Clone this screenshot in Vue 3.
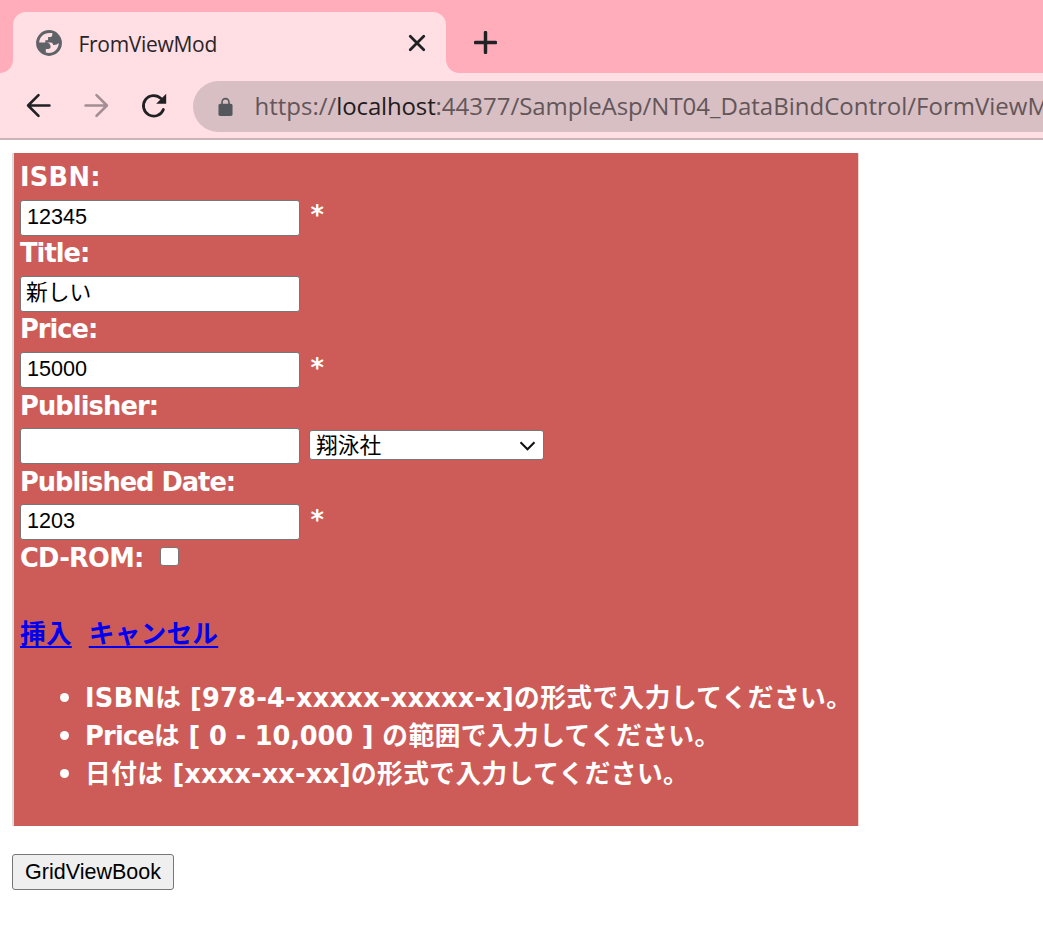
<script setup>
const fields = [
  { label: 'ISBN:', cls: 'isbn', value: '12345', star: true },
  { label: 'Title:', cls: 'title', value: '新しい' },
  { label: 'Price:', cls: 'price', value: '15000', star: true },
  { label: 'Publisher:', cls: 'publisher', value: '', select: '翔泳社' },
  { label: 'Published Date:', cls: 'date', value: '1203', star: true },
]
</script>

<template>
  <div class="page">
    <header class="tabs">
      <div class="tab">
        <svg class="globe" viewBox="0 0 26 26">
          <circle cx="13" cy="13" r="12.9" fill="#5f6368" />
          <path d="M3.200 12.500C3.400 7 8 3 13.500 3.100h2.800v1.600c0 1.400-.9 2.300-2.200 2.300h-2v1.900c0 .8-.5 1.300-1.300 1.300H9.300v2.200h5.200c1.700 0 2.700 1.100 2.700 2.500 2.200.3 3.900-.3 5.500-1.800.2 5.500-4.300 9.900-9.700 9.900-1.200 0-2.200-.2-3.200-.5v-3.600h2.500c1.500 0 2.300-.9 2.300-2.200 0-2.600-1.900-4.200-4.600-4.200z" fill="#ffdee4" />
        </svg>
        <span class="tabname">FromViewMod</span>
        <svg class="close" viewBox="0 0 16 16"><path d="M2 2 14 14M14 2 2 14" /></svg>
      </div>
      <svg class="plus" viewBox="0 0 22 22"><path d="M11 1.500V20.500M1.500 11H20.500" /></svg>
    </header>
    <nav class="bar">
      <svg class="nav back" viewBox="0 0 24 24"><path d="M22.500 12H2M12 2 2 12l10 10" /></svg>
      <svg class="nav fwd" viewBox="0 0 24 24"><path d="M1.500 12H22M12 2l10 10-10 10" /></svg>
      <svg class="reload" viewBox="0 0 26 26">
        <path d="M22.400 16.500A10.300 10.300 0 1 1 20 5.500" fill="none" stroke="#202124" stroke-width="2.800" stroke-linecap="round" />
        <path d="M25.200.8V10.800H15.200z" fill="#202124" />
      </svg>
      <div class="url">
        <svg class="lock" viewBox="0 0 16 20">
          <rect x=".5" y="6.500" width="15" height="13" rx="1.800" fill="#54585c" />
          <path d="M4.300 8V4.800a3.700 3.700 0 0 1 7.400 0V8" fill="none" stroke="#54585c" stroke-width="1.700" />
        </svg>
        <span class="address">https://<span class="host">localhost</span>:44377/<span class="samp">SampleAsp/</span>NT04_DataBindControl/FormViewM</span>
      </div>
    </nav>
    <main>
      <div class="form">
        <template v-for="f in fields" :key="f.cls">
          <div class="row"><span :class="f.cls">{{ f.label }}</span></div>
          <div class="row entry">
            <div class="input" :class="{ ja: f.cls === 'title' }">{{ f.value }}</div>
            <span v-if="f.star" class="star">*</span>
            <div v-if="f.select" class="select">
              <span>{{ f.select }}</span>
              <svg viewBox="0 0 16 10"><path d="M1 1.300 8 8.300 15 1.300" /></svg>
            </div>
          </div>
        </template>
        <div class="row"><span class="cd">CD-ROM:</span><i class="check"></i></div>
        <div class="row links"><a>挿入</a><a>キャンセル</a></div>
        <ul>
          <li><span class="l1">ISBN</span>は <span class="p1">[978-4-xxxxx-xxxxx-x]</span><span class="tail">の形式で入力してください。</span></li>
          <li><span class="l2">Price</span>は <span class="p2">[ 0 - 10,000 ]</span> <span class="tail">の範囲で入力してください。</span></li>
          <li><span class="tail">日付は</span> <span class="p3">[xxxx-xx-xx]</span><span class="tail">の形式で入力してください。</span></li>
        </ul>
      </div>
      <div class="button">GridViewBook</div>
    </main>
  </div>
</template>

<style>
body { margin: 0; background: #fff; }
</style>
<style scoped>
.page { width: 1043px; height: 944px; overflow: hidden; background: #fff; font-family: "DejaVu Sans", "Noto Sans CJK JP", sans-serif; }
svg { display: block; flex: none; fill: none; }
.tabs { height: 73px; background: #ffacbb; display: flex; }
.tab { position: relative; box-sizing: border-box; width: 433px; height: 61px; margin: 12px 0 0 13px; padding: 0 20px 0 23px; border-radius: 13px 13px 0 0; background: #ffdee4; display: flex; align-items: center; }
.tab::before, .tab::after { content: ""; position: absolute; bottom: 0; width: 13px; height: 13px; }
.tab::before { left: -13px; background: radial-gradient(circle at 0 0, #ffacbb 12.5px, #ffdee4 13.2px); }
.tab::after { right: -13px; background: radial-gradient(circle at 100% 0, #ffacbb 12.5px, #ffdee4 13.2px); }
.globe { width: 26px; height: 26px; margin-right: .5px; }
.tabname { margin: 3px 0 0 16px; flex: 1; font: 21px/28px "Open Sans", sans-serif; letter-spacing: -.3px; color: #2b2427; }
.close { width: 18px; height: 18px; }
.close path { stroke: #202124; stroke-width: 2.5; stroke-linecap: round; }
.plus { width: 23px; height: 23px; margin: 31px 0 0 27.500px; }
.plus path { stroke: #202124; stroke-width: 3.3; stroke-linecap: round; }
.bar { box-sizing: border-box; height: 67px; background: #ffdee4; border-bottom: 2px solid #cbb3b9; display: flex; align-items: center; padding-left: 26px; }
.nav { width: 25px; height: 25px; }
.nav path { stroke: #202124; stroke-width: 2.500; stroke-linecap: round; stroke-linejoin: round; }
.fwd { margin-left: 33px; }
.fwd path { stroke: #a28e93; }
.reload { width: 26px; height: 26px; margin-left: 32px; }
.url { box-sizing: border-box; flex: 1; min-width: 0; height: 51px; margin: 2px 0 0 26px; padding-left: 25px; border-radius: 26px 0 0 26px; background: #d8bfc4; display: flex; align-items: center; overflow: hidden; }
.lock { width: 15px; height: 20px; }
.address { margin: -1px 0 0 21.500px; white-space: nowrap; font: 24px/34px "Open Sans", sans-serif; color: #635659; }
.host { color: #221c1e; letter-spacing: -.15px; }
.samp { letter-spacing: -.1px; }
main { padding: 13px 0 0 12px; }
.form { box-sizing: border-box; width: 847px; height: 673px; padding: 5px 0 0 6px; border-left: 2px solid #ddd; border-right: 1px solid #ecd5d5; background: #cd5c58; color: #fff; font-weight: 700; font-size: 25.700px; }
.row { height: 38.110px; line-height: 38px; display: flex; align-items: center; white-space: nowrap; }
.isbn { letter-spacing: .25px; }
.title { letter-spacing: -.95px; }
.price { letter-spacing: -1px; }
.publisher { letter-spacing: -.9px; }
.date { letter-spacing: -1px; }
.cd { letter-spacing: -.75px; }
.input { box-sizing: border-box; width: 280px; height: 36px; border: 1px solid #767676; border-radius: 3px; background: #fff; color: #000; font: 21.600px/32px "Liberation Sans", sans-serif; padding-left: 6px; margin-top: 4.700px; }
.ja { font: 400 21.800px/28px "Noto Sans CJK JP", sans-serif; padding-left: 5px; }
.star { margin: 0 0 0 10.500px; }
.select { box-sizing: border-box; width: 235px; height: 30px; margin: 2.500px 0 0 9px; border: 1px solid #767676; border-radius: 3px; background: #fff; color: #000; font: 400 21.700px/27px "Noto Sans CJK JP", sans-serif; display: flex; align-items: center; justify-content: space-between; padding: 0 7px 0 6px; }
.select span { margin-top: -3px; }
.select svg { width: 17px; height: 10px; margin-top: 1px; }
.select path { stroke: #101010; stroke-width: 2; }
.check { box-sizing: border-box; width: 19px; height: 19px; margin: -4px 0 0 16px; border: 1px solid #767676; border-radius: 3px; background: #fff; }
.links { margin-top: 37.500px; gap: 17px; color: #00e; }
a { letter-spacing: .2px; text-decoration: underline; text-decoration-thickness: 2px; text-underline-offset: 3px; text-decoration-skip-ink: none; }
ul { margin: 26px 0 0; padding: 0 0 0 65px; list-style: none; }
li { height: 38px; line-height: 38px; white-space: nowrap; }
li::before { content: ""; display: inline-block; width: 9px; height: 9px; margin: 0 16px 5px -25px; border-radius: 50%; background: #fff; vertical-align: baseline; }
.l1 { letter-spacing: .3px; }
.l2 { letter-spacing: -.8px; }
.p1 { letter-spacing: .2px; }
.p2 { letter-spacing: -.15px; }
.p3 { letter-spacing: .1px; }
.tail { letter-spacing: .45px; }
.button { box-sizing: border-box; width: 162px; height: 36px; margin-top: 28px; border: 1px solid #767676; border-radius: 3px; background: #efefef; color: #000; font: 21.500px/34px "Liberation Sans", sans-serif; text-align: center; }
</style>
